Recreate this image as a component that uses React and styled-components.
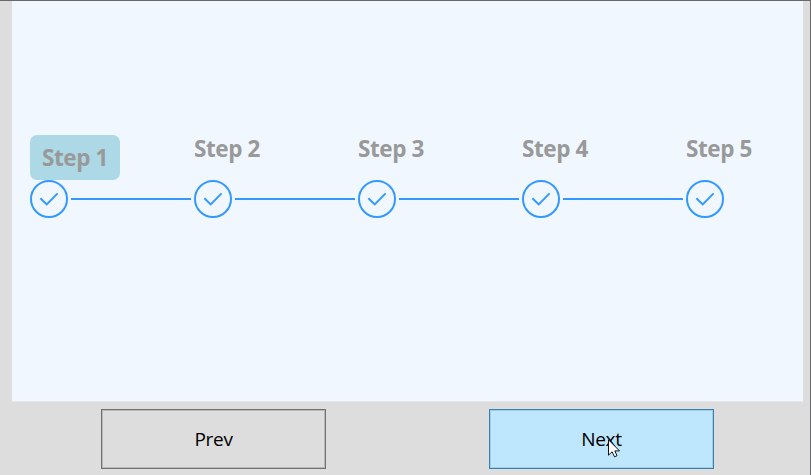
import React from 'react';
import styled, { createGlobalStyle } from 'styled-components';

const GlobalStyle = createGlobalStyle`
  * { box-sizing: border-box; }
  body { margin: 0; overflow: hidden; background: #dddddd; }
`;

const Window = styled.main`
  display: flex;
  flex-direction: column;
  width: 811px;
  height: 475px;
  padding: 0 7px 0 12px;
  background: #dddddd;
  border-top: 1px solid #68686b;
  border-right: 1px solid #68686b;
  font-family: 'Open Sans', 'Noto Sans', sans-serif;
`;

const Panel = styled.section`
  height: 401px;
  padding: 134px 0 0 18px;
  background: #f0f7ff;
  border-bottom: 1px solid #e5e9ee;
`;

const Steps = styled.ol`
  display: flex;
  margin: 0;
  padding: 0;
  list-style: none;
`;

const Step = styled.li`
  flex: 0 0 164px;
  width: 164px;
  &:last-child { flex-basis: 80px; }
`;

const LabelArea = styled.div`
  height: 45px;
`;

const Label = styled.div`
  width: ${({ $active }) => ($active ? '90px' : 'max-content')};
  height: ${({ $active }) => ($active ? '45px' : '27px')};
  padding-left: ${({ $active }) => ($active ? '12px' : '0')};
  border-radius: 7px;
  background: ${({ $active }) => ($active ? '#add8e6' : 'transparent')};
  color: #999999;
  font-size: 22.5px;
  font-weight: 700;
  letter-spacing: -0.4px;
  line-height: ${({ $active }) => ($active ? '45px' : '27px')};
  white-space: nowrap;
`;

const Track = styled.div`
  display: flex;
  align-items: center;
  gap: 3px;
`;

const Marker = styled.svg`
  display: block;
  flex: none;
  fill: none;
  stroke: #3399ff;
  stroke-width: 2;
`;

const Connector = styled.div`
  width: 120px;
  height: 2px;
  background: #3399ff;
`;

const Footer = styled.footer`
  display: flex;
  gap: 163px;
  padding: 7px 0 0 89px;
`;

const Button = styled.button`
  position: relative;
  width: 225px;
  height: 60px;
  padding: 0;
  border: 1px solid ${({ $hot }) => ($hot ? '#3c7fb1' : '#707070')};
  box-shadow: inset 0 0 0 1px ${({ $hot }) => ($hot ? '#9eccea' : '#b9b9b9')};
  background: ${({ $hot }) => ($hot ? '#bee6fd' : '#dddddd')};
  color: #000;
  font-family: inherit;
  font-size: 19px;
  letter-spacing: -0.3px;
  line-height: 58px;
`;

const Cursor = styled.svg`
  position: absolute;
  left: 118px;
  top: 29px;
`;

const labels = ['Step 1', 'Step 2', 'Step 3', 'Step 4', 'Step 5'];

export default function App() {
  return (
    <Window>
      <GlobalStyle />
      <Panel>
        <Steps>
          {labels.map((label, i) => (
            <Step key={label}>
              <LabelArea>
                <Label $active={i === 0}>{label}</Label>
              </LabelArea>
              <Track>
                <Marker width="38" height="38" viewBox="0 0 38 38">
                  <circle cx="19" cy="19" r="18" />
                  <path d="M10.4 18.3 16.7 24.4 27.6 13.4" />
                </Marker>
                {i < labels.length - 1 && <Connector />}
              </Track>
            </Step>
          ))}
        </Steps>
      </Panel>
      <Footer>
        <Button>Prev</Button>
        <Button $hot>
          Next
          <Cursor width="13" height="19" viewBox="0 0 13 19">
            <path
              d="M.5.8V16.2L4.1 12.8 6.5 17.8 9 16.7 6.8 11.9H11.5Z"
              fill="#fff"
              stroke="#111"
              strokeWidth="1"
            />
          </Cursor>
        </Button>
      </Footer>
    </Window>
  );
}
